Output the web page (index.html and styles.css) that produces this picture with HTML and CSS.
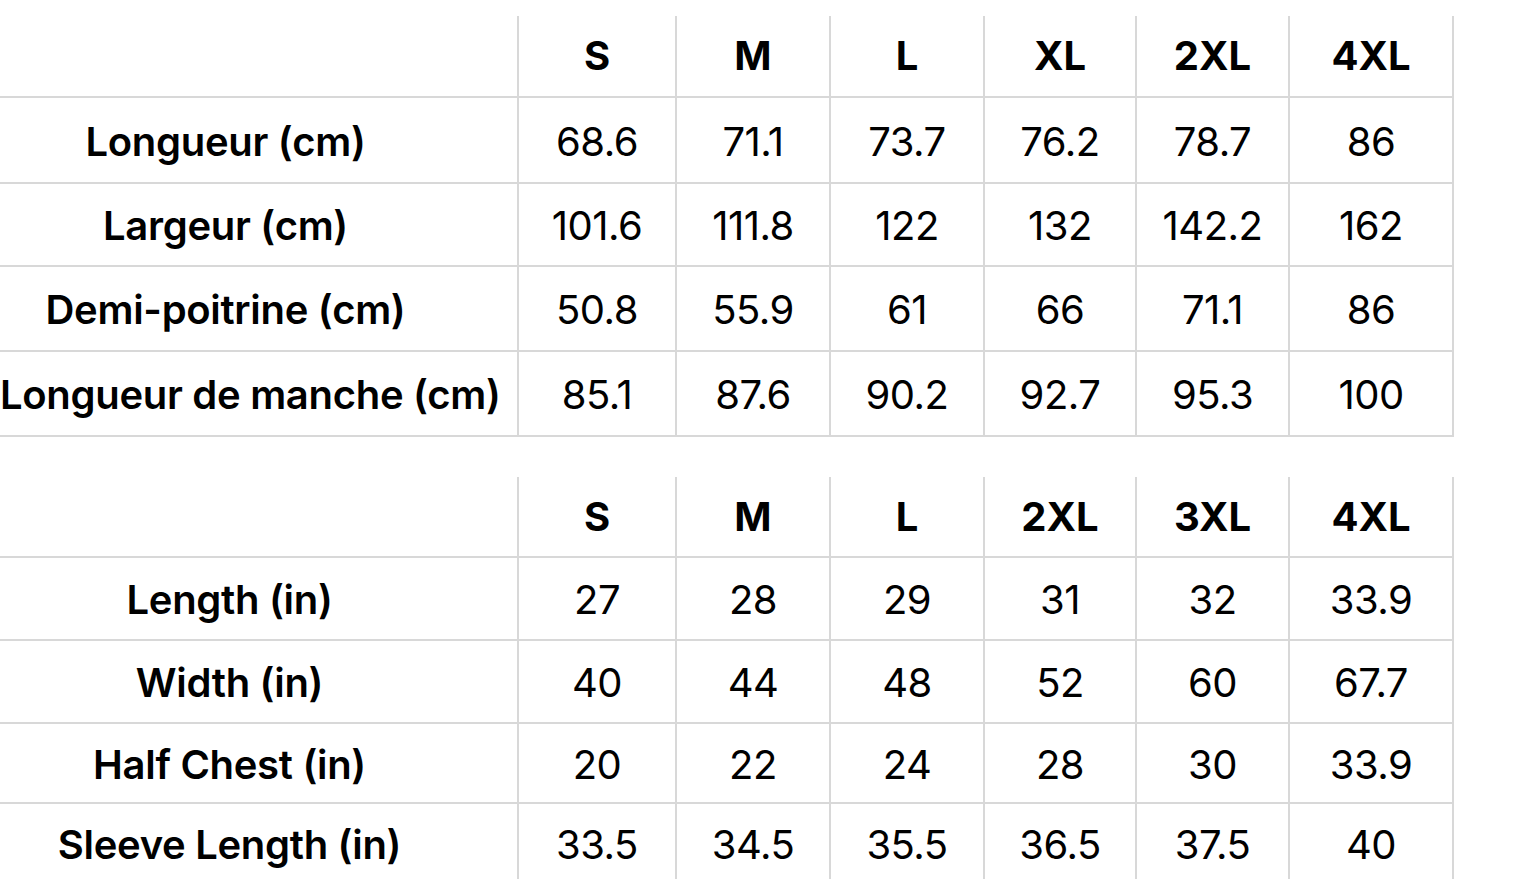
FILE: index.html
```html
<!DOCTYPE html>
<html lang="fr">
<head>
<meta charset="utf-8">
<title>Guide des tailles</title>
<link rel="stylesheet" href="styles.css">
</head>
<body>
<main class="page">
  <table class="size-table size-table--cm">
    <colgroup>
      <col class="col-label"><col class="col-s"><col class="col-m"><col class="col-l"><col class="col-xl"><col class="col-2xl"><col class="col-4xl">
    </colgroup>
    <thead>
      <tr class="row-head">
        <th class="corner"></th><th>S</th><th>M</th><th>L</th><th>XL</th><th>2XL</th><th>4XL</th>
      </tr>
    </thead>
    <tbody>
      <tr class="row-a"><th>Longueur (cm)</th><td>68.6</td><td>71.1</td><td>73.7</td><td>76.2</td><td>78.7</td><td>86</td></tr>
      <tr class="row-b"><th>Largeur (cm)</th><td>101.6</td><td>111.8</td><td>122</td><td>132</td><td>142.2</td><td>162</td></tr>
      <tr class="row-c"><th>Demi-poitrine (cm)</th><td>50.8</td><td>55.9</td><td>61</td><td>66</td><td>71.1</td><td>86</td></tr>
      <tr class="row-d"><th>Longueur de manche (cm)</th><td>85.1</td><td>87.6</td><td>90.2</td><td>92.7</td><td>95.3</td><td>100</td></tr>
    </tbody>
  </table>

  <table class="size-table size-table--in">
    <colgroup>
      <col class="col-label"><col class="col-s"><col class="col-m"><col class="col-l"><col class="col-xl"><col class="col-2xl"><col class="col-4xl">
    </colgroup>
    <thead>
      <tr class="row-head">
        <th class="corner"></th><th>S</th><th>M</th><th>L</th><th>2XL</th><th>3XL</th><th>4XL</th>
      </tr>
    </thead>
    <tbody>
      <tr class="row-a"><th>Length (in)</th><td>27</td><td>28</td><td>29</td><td>31</td><td>32</td><td>33.9</td></tr>
      <tr class="row-b"><th>Width (in)</th><td>40</td><td>44</td><td>48</td><td>52</td><td>60</td><td>67.7</td></tr>
      <tr class="row-c"><th>Half Chest (in)</th><td>20</td><td>22</td><td>24</td><td>28</td><td>30</td><td>33.9</td></tr>
      <tr class="row-d"><th>Sleeve Length (in)</th><td>33.5</td><td>34.5</td><td>35.5</td><td>36.5</td><td>37.5</td><td>40</td></tr>
    </tbody>
  </table>
</main>
</body>
</html>
```

FILE: styles.css
```css
html, body {
  margin: 0;
  padding: 0;
  background: #ffffff;
}

body {
  font-family: Inter, "Noto Sans", "Liberation Sans", sans-serif;
  color: #000000;
  overflow: hidden;
}

.page {
  display: flex;
  flex-direction: column;
  gap: 40px;
  padding-top: 16px;
}

.size-table {
  border-collapse: collapse;
  table-layout: fixed;
  width: 1453px;
}

.col-label { width: 518px; }
.col-s { width: 158px; }
.col-m { width: 154px; }
.col-l { width: 154px; }
.col-xl { width: 152px; }
.col-2xl { width: 153px; }
.col-4xl { width: 164px; }

.size-table th,
.size-table td {
  border-right: 2px solid #d8d8d8;
  border-bottom: 2px solid #d8d8d8;
  text-align: center;
  vertical-align: middle;
  padding: 0;
  font-size: 40px;
  line-height: 1.2;
  white-space: nowrap;
}

.size-table thead th {
  font-weight: 700;
  letter-spacing: 0;
}

.size-table tbody th {
  font-weight: 600;
  letter-spacing: -0.3px;
  padding: 3px 66px 0 0;
  overflow: visible;
}

.size-table--in tbody th {
  padding-right: 58px;
}

.size-table td {
  font-weight: 400;
  letter-spacing: -0.5px;
  padding-top: 3px;
}

.size-table--cm .row-head { height: 81px; }
.size-table--cm .row-a { height: 86px; }
.size-table--cm .row-b { height: 83px; }
.size-table--cm .row-c { height: 85px; }
.size-table--cm .row-d { height: 85px; }

.size-table--in .row-head { height: 80px; }
.size-table--in .row-a { height: 83px; }
.size-table--in .row-b { height: 83px; }
.size-table--in .row-c { height: 80px; }
.size-table--in .row-d { height: 81px; }
```
